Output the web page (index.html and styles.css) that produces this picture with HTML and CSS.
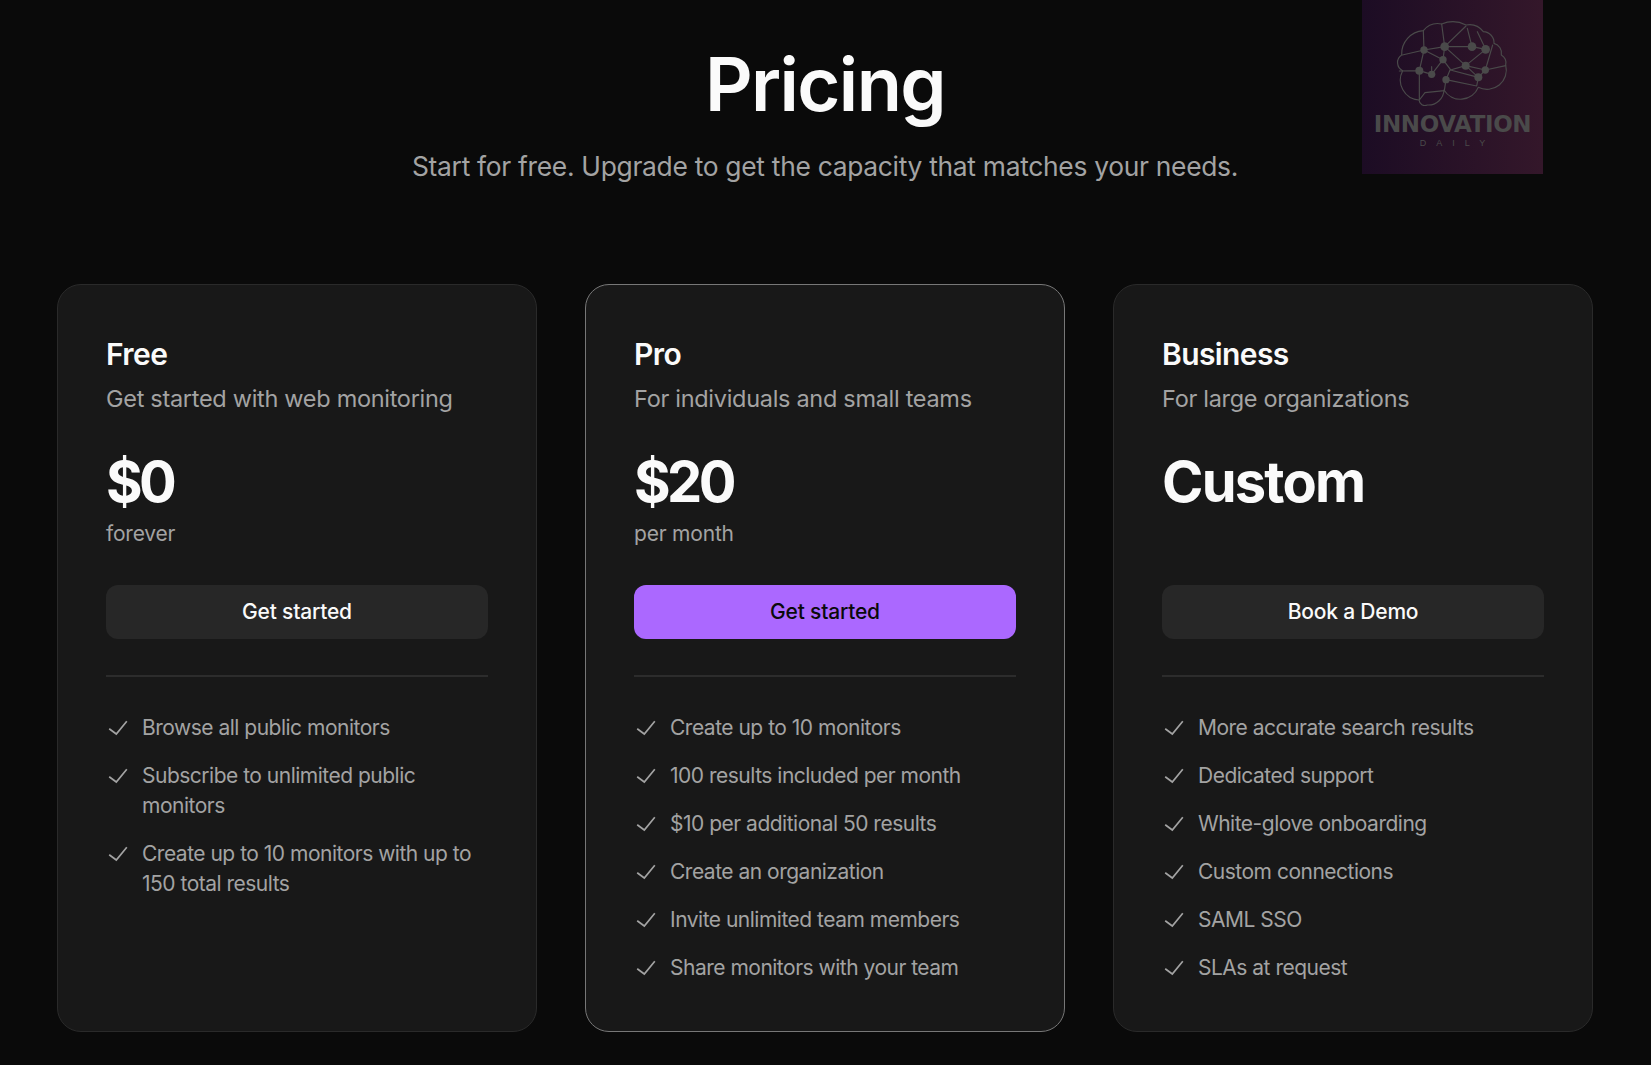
FILE: index.html
```html
<!DOCTYPE html>
<html lang="en">
<head>
<meta charset="utf-8">
<title>Pricing</title>
<link rel="stylesheet" href="styles.css">
</head>
<body>
<svg class="defs" width="0" height="0" aria-hidden="true"><symbol id="check" viewBox="0 0 24 24"><path d="M3.2 12.8L10.3 18L20.8 5.2" fill="none" stroke="currentColor" stroke-width="1.7"/></symbol></svg>
<div class="logo">
  <svg class="brain" viewBox="66 0 543 522" aria-hidden="true">
    <g fill="none" stroke="#4a4a4a" stroke-width="3.5" stroke-linejoin="round" stroke-linecap="round">
      <path d="M237 300A60 60 0 0 1 188 212A27 27 0 0 1 185 165A70 70 0 0 1 250 92A56 56 0 0 1 305 72A85 85 0 0 1 378 75A53 53 0 0 1 430 95A33 33 0 0 1 462 130A30 30 0 0 1 484 165A26 26 0 0 1 497 195A58 58 0 0 1 415 262A58 58 0 0 1 312 270A47 47 0 0 1 262 315A18 18 0 0 1 237 300Z"/>
      <path d="M250 92L252 150L187 165M252 150L314 140L305 72M314 140L378 78M314 140H396L382 85M396 140L437 148L412 95M437 148L377 197M458 135L436 210M252 150L309 179M252 150L238 212L178 213M238 212V300L255 278L313 272L318 239M309 179L275 223L275 200M275 223L238 212M309 179L331 208L318 239M314 140L309 179M314 140L377 197L331 210L415 232L436 210L497 197M377 197L436 210M377 197L415 232M318 239L410 258L415 232"/>
    </g>
    <g fill="#4a4a4a">
      <circle cx="252" cy="150" r="11"/><circle cx="314" cy="140" r="13"/><circle cx="396" cy="140" r="13"/><circle cx="437" cy="148" r="13"/><circle cx="309" cy="179" r="11"/><circle cx="377" cy="197" r="12"/><circle cx="436" cy="210" r="11"/><circle cx="238" cy="212" r="12"/><circle cx="275" cy="223" r="11"/><circle cx="318" cy="239" r="11"/><circle cx="415" cy="232" r="12"/>
    </g>
  </svg>
  <div class="logo-name">INNOVATION</div>
  <div class="logo-sub">DAILY</div>
</div>
<main class="page">
  <header class="hero">
    <h1 class="title">Pricing</h1>
    <p class="subtitle">Start for free. Upgrade to get the capacity that matches your needs.</p>
  </header>
  <section class="plans">
    <article class="card">
      <h2 class="plan-name">Free</h2>
      <p class="plan-desc">Get started with web monitoring</p>
      <div class="price price-num">$0</div>
      <div class="period">forever</div>
      <a class="btn">Get started</a>
      <hr class="rule">
      <ul class="features">
        <li class="feature"><svg class="tick"><use href="#check"/></svg><span>Browse all public monitors</span></li>
        <li class="feature"><svg class="tick"><use href="#check"/></svg><span>Subscribe to unlimited public monitors</span></li>
        <li class="feature"><svg class="tick"><use href="#check"/></svg><span>Create up to 10 monitors with up to 150 total results</span></li>
      </ul>
    </article>
    <article class="card card-pro">
      <h2 class="plan-name">Pro</h2>
      <p class="plan-desc">For individuals and small teams</p>
      <div class="price price-num">$20</div>
      <div class="period">per month</div>
      <a class="btn btn-primary">Get started</a>
      <hr class="rule">
      <ul class="features">
        <li class="feature"><svg class="tick"><use href="#check"/></svg><span>Create up to 10 monitors</span></li>
        <li class="feature"><svg class="tick"><use href="#check"/></svg><span>100 results included per month</span></li>
        <li class="feature"><svg class="tick"><use href="#check"/></svg><span>$10 per additional 50 results</span></li>
        <li class="feature"><svg class="tick"><use href="#check"/></svg><span>Create an organization</span></li>
        <li class="feature"><svg class="tick"><use href="#check"/></svg><span>Invite unlimited team members</span></li>
        <li class="feature"><svg class="tick"><use href="#check"/></svg><span>Share monitors with your team</span></li>
      </ul>
    </article>
    <article class="card">
      <h2 class="plan-name">Business</h2>
      <p class="plan-desc">For large organizations</p>
      <div class="price">Custom</div>
      <div class="period">&nbsp;</div>
      <a class="btn">Book a Demo</a>
      <hr class="rule">
      <ul class="features">
        <li class="feature"><svg class="tick"><use href="#check"/></svg><span>More accurate search results</span></li>
        <li class="feature"><svg class="tick"><use href="#check"/></svg><span>Dedicated support</span></li>
        <li class="feature"><svg class="tick"><use href="#check"/></svg><span>White-glove onboarding</span></li>
        <li class="feature"><svg class="tick"><use href="#check"/></svg><span>Custom connections</span></li>
        <li class="feature"><svg class="tick"><use href="#check"/></svg><span>SAML SSO</span></li>
        <li class="feature"><svg class="tick"><use href="#check"/></svg><span>SLAs at request</span></li>
      </ul>
    </article>
  </section>
</main>
</body>
</html>
```
FILE: styles.css
```css
* { box-sizing: border-box; }
html, body { margin: 0; padding: 0; }
body {
  background: #0a0a0a;
  color: #fafafa;
  font-family: "Inter", "Noto Sans", sans-serif;
  height: 1065px;
  overflow: hidden;
  position: relative;
}
.defs { position: absolute; }
.logo {
  position: absolute;
  left: 1362px;
  top: 0;
  width: 181px;
  height: 174px;
  background: linear-gradient(90deg, #1c0c24, #34172a);
  display: flex;
  flex-direction: column;
  align-items: center;
  overflow: hidden;
}
.brain { width: 181px; height: 174px; position: absolute; left: 0; top: 0; }
.logo-name {
  margin-top: 112px;
  font-family: "DejaVu Sans", sans-serif;
  font-weight: 700;
  font-size: 23px;
  line-height: 24px;
  letter-spacing: -0.4px;
  color: #4a4a4a;
  position: relative;
  white-space: nowrap;
}
.logo-sub {
  margin-top: 2px;
  font-family: "Liberation Sans", sans-serif;
  font-size: 9px;
  line-height: 10px;
  letter-spacing: 10px;
  margin-right: -10px;
  color: #4a4a4a;
  position: relative;
}
.page { padding: 0 58px 0 57px; }
.hero { text-align: center; padding-top: 39px; height: 284px; }
.title { margin: 0; font-size: 74px; line-height: 90px; font-weight: 600; letter-spacing: -1.6px; }
.subtitle { margin: 19px 0 0; font-size: 26.4px; line-height: 36px; color: #a3a3a3; letter-spacing: -0.3px; }
.plans { display: grid; grid-template-columns: repeat(3, 480px); gap: 48px; }
.card {
  background: #181818;
  border: 1px solid #2a2a2a;
  border-radius: 24px;
  padding: 48px;
  height: 748px;
}
.card-pro { border-color: #777; }
.plan-name { margin: 1px 0 0; font-size: 30px; line-height: 40px; font-weight: 600; letter-spacing: -0.6px; }
.plan-desc { margin: 7px 0 0; font-size: 23.5px; line-height: 36px; color: #a3a3a3; letter-spacing: -0.3px; }
.price { margin-top: 33px; font-size: 56px; line-height: 64px; font-weight: 700; letter-spacing: -1.8px; }
.price-num { letter-spacing: -3.6px; }
.period { margin-top: 4px; font-size: 21px; line-height: 32px; color: #a3a3a3; letter-spacing: -0.2px; }
.btn {
  display: block;
  margin-top: 35px;
  height: 54px;
  border-radius: 12px;
  background: #272727;
  color: #fafafa;
  text-align: center;
  font-size: 21px;
  line-height: 54px;
  font-weight: 500;
  letter-spacing: -0.2px;
}
.btn-primary { background: #ab68ff; color: #0a0a0a; }
.rule { border: 0; border-top: 2px solid #2c2c2c; margin: 36px 0 36px; }
.features { list-style: none; margin: 0; padding: 0; display: flex; flex-direction: column; gap: 18px; }
.feature { display: flex; gap: 12px; font-size: 21px; line-height: 30px; color: #a3a3a3; letter-spacing: -0.5px; }
.tick { width: 24px; height: 24px; flex: none; margin-top: 3px; color: #a3a3a3; }
```
